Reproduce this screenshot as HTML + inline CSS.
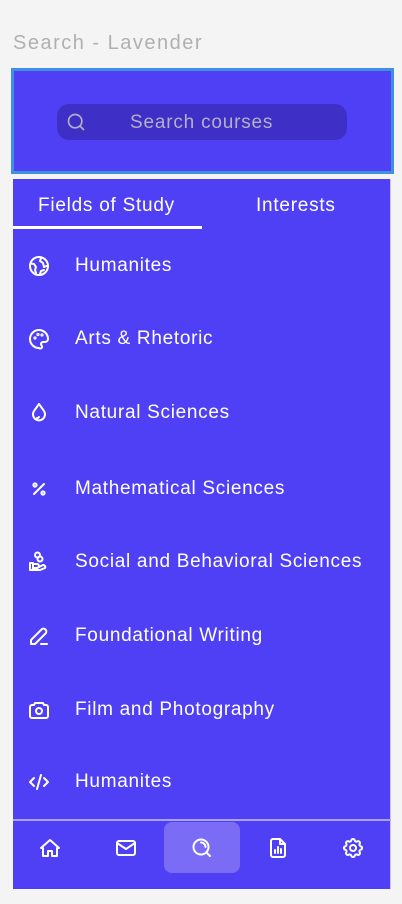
<!DOCTYPE html>
<html><head><meta charset="utf-8"><style>
*{margin:0;padding:0;box-sizing:border-box}
body{width:402px;height:904px;background:#f4f4f4;font-family:"Liberation Sans",sans-serif;position:relative;overflow:hidden}
.title{position:absolute;left:13px;top:32px;font-size:20px;color:#b0b0b0;letter-spacing:1.5px}
.sbox{position:absolute;left:11px;top:68px;width:383px;height:106px;background:#5040f5;border:3px solid #3f8fe3}
.pill{position:absolute;left:43px;top:33px;width:290px;height:36px;border-radius:12px;background:#3e2fc6}
.pill span{position:absolute;left:73px;top:8px;font-size:19px;color:#b4b0c8;letter-spacing:0.8px}
.pill svg{position:absolute;left:9px;top:8px}
.panel{position:absolute;left:13px;top:179px;width:378px;height:710px;background:#5040f5;border-right:1px solid #c8c4f4}
.tab{position:absolute;top:16px;font-size:19px;color:#fff;letter-spacing:0.75px}
.ul{position:absolute;left:0;top:47px;width:189px;height:3px;background:#fff}
.item{position:absolute;left:0;width:378px;height:30px}
.item svg{position:absolute;left:14px;top:4px}
.item span{position:absolute;left:62px;top:5px;font-size:19px;color:#fff;letter-spacing:0.7px}
.nav{position:absolute;left:0;top:640px;width:378px;height:70px;border-top:2px solid #a9a2f0}
.nav svg{position:absolute;top:15px}
.act{position:absolute;left:151px;top:1px;width:76px;height:51px;border-radius:8px;background:#7a6cf5}
</style></head><body>
<div class="title">Search - Lavender</div>
<div class="sbox"><div class="pill"><svg width="20" height="20" viewBox="0 0 24 24" fill="none" stroke="#b4b0c8" stroke-width="2" stroke-linecap="round"><circle cx="11" cy="11" r="8"/><path d="M21 21l-4-4"/></svg><span>Search courses</span></div></div>
<div class="panel">
<div class="tab" style="left:25px">Fields of Study</div>
<div class="tab" style="left:243px">Interests</div>
<div class="ul"></div>

<div class="item" style="top:71px"><svg width="24" height="24" viewBox="0 0 24 24" fill="none" stroke="#fff" stroke-width="2" stroke-linecap="round" stroke-linejoin="round"><circle cx="12" cy="12" r="9"/><path d="M4 9.5l3 .5 2 3-1 3 1 3M14 4l-1 3 3 2 1 4 2.5-1M13 20l1-3 3-1"/></svg><span>Humanites</span></div>
<div class="item" style="top:144px"><svg width="24" height="24" viewBox="0 0 24 24" fill="none" stroke="#fff" stroke-width="2" stroke-linecap="round" stroke-linejoin="round"><path d="M12 21a9 9 0 1 1 9-9c0 2-1.5 3-3.5 3H16a2 2 0 0 0-1.5 3.3A1.7 1.7 0 0 1 12 21z"/><circle cx="8" cy="11" r=".6"/><circle cx="11" cy="7.5" r=".6"/><circle cx="15" cy="8" r=".6"/></svg><span>Arts &amp; Rhetoric</span></div>
<div class="item" style="top:218px"><svg width="24" height="24" viewBox="0 0 24 24" fill="none" stroke="#fff" stroke-width="2" stroke-linecap="round" stroke-linejoin="round"><path d="M12 3l5 7a6 6 0 1 1-10 0z"/><path d="M10 17a2 2 0 0 0 2-1"/></svg><span>Natural Sciences</span></div>
<div class="item" style="top:294px"><svg width="24" height="24" viewBox="0 0 24 24" fill="none" stroke="#fff" stroke-width="2" stroke-linecap="round"><path d="M17 7L7 17"/><circle cx="8" cy="8" r="1.6"/><circle cx="16" cy="16" r="1.6"/></svg><span>Mathematical Sciences</span></div>
<div class="item" style="top:367px"><svg width="24" height="24" viewBox="0 0 24 24" fill="none" stroke="#fff" stroke-width="2" stroke-linecap="round" stroke-linejoin="round"><circle cx="10.5" cy="5" r="2.5"/><circle cx="13" cy="9" r="2.5"/><path d="M3 13h3v7H3zM6 14h4a2 2 0 0 1 0 4h-3M10 18l6-3a2 2 0 0 1 2 3l-5 2H6"/></svg><span>Social and Behavioral Sciences</span></div>
<div class="item" style="top:441px"><svg width="24" height="24" viewBox="0 0 24 24" fill="none" stroke="#fff" stroke-width="2" stroke-linecap="round" stroke-linejoin="round"><path d="M4 20h4L18.5 9.5a2.8 2.8 0 0 0-4-4L4 16z M14 20h6"/></svg><span>Foundational Writing</span></div>
<div class="item" style="top:515px"><svg width="24" height="24" viewBox="0 0 24 24" fill="none" stroke="#fff" stroke-width="2" stroke-linecap="round" stroke-linejoin="round"><path d="M5 7h2l1-2h8l1 2h2a2 2 0 0 1 2 2v9a2 2 0 0 1-2 2H5a2 2 0 0 1-2-2V9a2 2 0 0 1 2-2z"/><circle cx="12" cy="13" r="3"/></svg><span>Film and Photography</span></div>
<div class="item" style="top:587px"><svg width="24" height="24" viewBox="0 0 24 24" fill="none" stroke="#fff" stroke-width="2" stroke-linecap="round" stroke-linejoin="round"><path d="M7 8l-4 4 4 4M17 8l4 4-4 4M14 5l-4 14"/></svg><span>Humanites</span></div>

<div class="nav">
<div class="act"></div>
<svg style="left:25px" width="24" height="24" viewBox="0 0 24 24" fill="none" stroke="#fff" stroke-width="2" stroke-linejoin="round"><path d="M3 12l9-8 9 8h-2v8h-5v-5h-4v5H5v-8z"/></svg>
<svg style="left:101px" width="24" height="24" viewBox="0 0 24 24" fill="none" stroke="#fff" stroke-width="2" stroke-linejoin="round"><rect x="3" y="5" width="18" height="14" rx="2"/><path d="M3 7l9 6 9-6"/></svg>
<svg style="left:177px" width="24" height="24" viewBox="0 0 24 24" fill="none" stroke="#fff" stroke-width="2" stroke-linecap="round"><circle cx="11" cy="11" r="7.5"/><path d="M20 20l-3.5-3.5M11 6.5a4.5 4.5 0 0 1 4.5 4.5"/></svg>
<svg style="left:253px" width="24" height="24" viewBox="0 0 24 24" fill="none" stroke="#fff" stroke-width="2" stroke-linecap="round" stroke-linejoin="round"><path d="M14 3H7a2 2 0 0 0-2 2v14a2 2 0 0 0 2 2h10a2 2 0 0 0 2-2V8z M14 3v5h5 M9 17v-3M12 17v-6M15 17v-4"/></svg>
<svg style="left:328px" width="24" height="24" viewBox="0 0 24 24" fill="none" stroke="#fff" stroke-width="2" stroke-linejoin="round"><path d="M10.3 4.3c.4-1.7 3-1.7 3.4 0a1.7 1.7 0 0 0 2.6 1.1c1.5-.9 3.300.8 2.4 2.4a1.7 1.7 0 0 0 1 2.5c1.8.4 1.8 3 0 3.4a1.7 1.7 0 0 0-1 2.6c.9 1.5-.9 3.3-2.4 2.4a1.7 1.7 0 0 0-2.6 1c-.4 1.8-3 1.8-3.4 0a1.7 1.7 0 0 0-2.6-1c-1.5.9-3.3-.9-2.4-2.4a1.7 1.7 0 0 0-1-2.6c-1.8-.4-1.8-3 0-3.4a1.7 1.7 0 0 0 1-2.5c-.9-1.6.9-3.3 2.4-2.4a1.7 1.7 0 0 0 2.6-1.1z"/><circle cx="12" cy="12" r="3"/></svg>
</div>
</div>
</body></html>
